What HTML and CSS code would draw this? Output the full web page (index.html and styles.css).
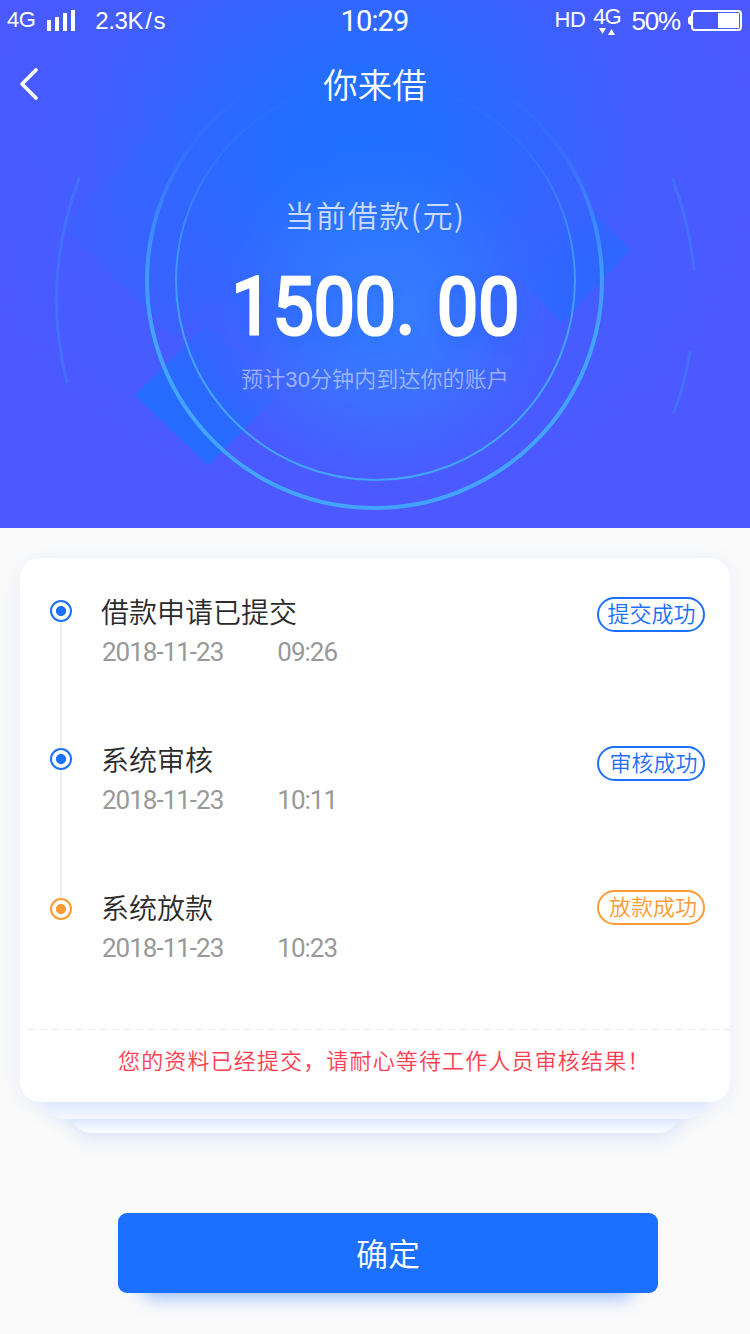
FILE: index.html
```html
<!DOCTYPE html>
<html lang="zh-CN">
<head>
<meta charset="utf-8">
<title>你来借</title>
<link rel="stylesheet" href="styles.css">
</head>
<body>
<div class="screen">
  <header class="hero">
    <svg class="hero-art" viewBox="0 0 750 528" width="750" height="528" aria-hidden="true">
      <defs>
        <linearGradient id="ring" x1="0" y1="80" x2="0" y2="330" gradientUnits="userSpaceOnUse">
          <stop offset="0" stop-color="#42a4ff" stop-opacity="0"/>
          <stop offset=".3" stop-color="#42a4ff" stop-opacity=".15"/>
          <stop offset=".7" stop-color="#42a4ff" stop-opacity=".75"/>
          <stop offset="1" stop-color="#42a4ff"/>
        </linearGradient>
        <radialGradient id="glow">
          <stop offset="0" stop-color="#3583ff" stop-opacity=".85"/>
          <stop offset=".45" stop-color="#3580ff" stop-opacity=".55"/>
          <stop offset="1" stop-color="#3a78ff" stop-opacity="0"/>
        </radialGradient>
        <linearGradient id="dl" x1="172" y1="430" x2="245" y2="360" gradientUnits="userSpaceOnUse">
          <stop offset="0" stop-color="#246cff"/>
          <stop offset=".45" stop-color="#246cff" stop-opacity=".85"/>
          <stop offset="1" stop-color="#246cff" stop-opacity=".25"/>
        </linearGradient>
        <linearGradient id="dr" x1="610" y1="290" x2="540" y2="215" gradientUnits="userSpaceOnUse">
          <stop offset="0" stop-color="#2a68ff" stop-opacity=".9"/>
          <stop offset=".5" stop-color="#2868ff" stop-opacity=".65"/>
          <stop offset="1" stop-color="#2868ff" stop-opacity="0"/>
        </linearGradient>
        <linearGradient id="db" x1="62" y1="0" x2="270" y2="0" gradientUnits="userSpaceOnUse">
          <stop offset="0" stop-color="#3167ff" stop-opacity=".3"/>
          <stop offset=".5" stop-color="#2f67ff" stop-opacity=".45"/>
          <stop offset="1" stop-color="#2b69ff" stop-opacity="0"/>
        </linearGradient>
      </defs>
      <path d="M62 225 187 100 300 213 175 338Z" fill="url(#db)"/>
      <path d="M135 395 208 323 280 395 208 465Z" fill="url(#dl)"/>
      <path d="M631 250 562 323 493 250 562 181Z" fill="url(#dr)"/>
      <ellipse cx="385" cy="315" rx="175" ry="175" fill="url(#glow)"/>
      <g fill="none" stroke="url(#ring)">
        <circle cx="374.500" cy="280.500" r="227.500" stroke-width="4"/>
        <circle cx="375.500" cy="280.500" r="199.500" stroke-width="2"/>
      </g>
      <g fill="none" stroke="#3f8cff" stroke-width="3" stroke-linecap="round" opacity=".42">
        <path d="M79 179Q41 281 67 382"/>
        <path d="M673 180Q689 222 694 269"/>
        <path d="M690 352Q685 383 674 412"/>
      </g>
    </svg>

    <div class="status">
      <div class="status-side">
        <span class="net">4G</span>
        <svg class="bars" width="29" height="21" viewBox="0 0 29 21"><path fill="#fff" d="M0 10h4v11H0zM8 7h4v14H8zM16 3h4v18h-4zM24 0h4v21h-4z"/></svg>
        <span class="speed">2.3K<i>/</i>s</span>
      </div>
      <time class="clock">10:29</time>
      <div class="status-side right">
        <span class="hd">HD</span>
        <span class="data"><span>4G</span><svg width="16" height="7" viewBox="0 0 16 7"><path fill="#fff" d="M0 0h7L3.500 6zM9 7h7l-3.500-6z"/></svg></span>
        <span class="pct">50%</span>
        <svg class="battery" width="54" height="21" viewBox="0 0 54 21"><rect x="4" y="1" width="49" height="19" rx="3" fill="none" stroke="#fff" stroke-width="2"/><path fill="#fff" d="M3 6v9H2L0 13V8l2-2zM30 3h21v15H30z"/></svg>
      </div>
    </div>

    <nav class="nav">
      <svg width="20" height="34" viewBox="0 0 20 34"><path d="M17 3 3 17 17 31" fill="none" stroke="#fff" stroke-width="3.600" stroke-linecap="round" stroke-linejoin="round"/></svg>
      <h1>你来借</h1>
    </nav>

    <div class="loan">
      <p class="loan-label">当前借款(元)</p>
      <p class="loan-amount">1500. 00</p>
      <p class="loan-note">预计30分钟内到达你的账户</p>
    </div>
  </header>

  <main class="content">
    <div class="stack">
      <section class="card">
        <ol class="steps">
          <li class="step">
            <span class="dot"></span>
            <div class="info"><h2>借款申请已提交</h2><p><span>2018-11-23</span><span>09:26</span></p></div>
            <span class="tag">提交成功</span>
          </li>
          <li class="step second">
            <span class="dot"></span>
            <div class="info"><h2>系统审核</h2><p><span>2018-11-23</span><span>10:11</span></p></div>
            <span class="tag">审核成功</span>
          </li>
          <li class="step current">
            <span class="dot"></span>
            <div class="info"><h2>系统放款</h2><p><span>2018-11-23</span><span>10:23</span></p></div>
            <span class="tag">放款成功</span>
          </li>
        </ol>
        <p class="notice">您的资料已经提交，请耐心等待工作人员审核结果！</p>
      </section>
      <div class="sheet sheet-one"></div>
      <div class="sheet sheet-two"></div>
    </div>
    <button class="confirm" type="button">确定</button>
  </main>
</div>
</body>
</html>
```
FILE: styles.css
```css
* { box-sizing: border-box; margin: 0; padding: 0; }
body {
  background: #fafafa;
  font-family: "Liberation Sans", "Noto Sans CJK SC", sans-serif;
  font-weight: 350;
}
.screen { width: 750px; height: 1334px; overflow: hidden; display: flex; flex-direction: column; }

.hero {
  position: relative;
  flex: none;
  height: 528px;
  color: #fff;
  background:
    radial-gradient(ellipse 400px 350px at 360px 150px, #1f70ff 0%, #236eff 20%, rgba(43, 105, 255, .8) 43%, rgba(60, 97, 255, .45) 70%, rgba(75, 89, 255, 0) 100%),
    #4b59ff;
}
.hero-art { position: absolute; inset: 0; }
.status, .nav, .loan { position: relative; }

.status {
  display: grid;
  grid-template-columns: 1fr auto 1fr;
  align-items: center;
  height: 40px;
  padding: 0 8px 0 7px;
}
.status-side { display: flex; align-items: center; }
.right { justify-content: flex-end; }
.net { font-size: 22px; letter-spacing: -.5px; }
.bars { margin-left: 12px; }
.speed { margin-left: 19px; padding-top: 1px; font-size: 24px; letter-spacing: -.4px; }
.speed i { font-style: normal; margin: 0 2px; }
.clock { font-family: Roboto, sans-serif; font-weight: 400; font-size: 29px; letter-spacing: -.8px; padding-top: 2px; }
.hd { font-size: 22px; letter-spacing: -.6px; }
.data { display: flex; flex-direction: column; align-items: center; margin: -1px 11px 0 8px; font-size: 22px; line-height: 24px; letter-spacing: -1px; }
.data svg { margin-top: -1px; }
.pct { font-size: 26px; letter-spacing: -1.2px; padding-top: 2px; }
.battery { margin-left: 8px; }

.nav {
  display: grid;
  grid-template-columns: 60px 1fr 60px;
  align-items: center;
  height: 88px;
  padding-left: 19px;
  padding-right: 19px;
}
.nav h1 { padding-top: 4px; text-align: center; font-size: 34.500px; font-weight: 350; line-height: 50px; }

.loan { display: flex; flex-direction: column; align-items: center; padding-top: 64px; }
.loan-label { font-family: "Noto Sans CJK SC", sans-serif; font-size: 30px; line-height: 44px; letter-spacing: 1.600px; color: rgba(255, 255, 255, .75); }
.loan-amount {
  margin-top: 23px;
  font-family: Roboto, sans-serif;
  font-size: 79.500px;
  line-height: 96px;
  font-weight: 400;
  word-spacing: 4px;
  white-space: pre;
  -webkit-text-stroke: 3.200px #fff;
  transform: scaleX(.92);
  text-shadow: 0 8px 14px rgba(20, 80, 245, .25);
}
.loan-note { margin-top: 9px; font-size: 22px; line-height: 32px; letter-spacing: .1px; color: rgba(255, 255, 255, .5); }

.content { display: flex; flex-direction: column; padding: 30px 20px 0; }
.stack { display: flex; flex-direction: column; align-items: center; isolation: isolate; }
.card {
  position: relative;
  z-index: 2;
  width: 710px;
  height: 544px;
  border-radius: 20px;
  background: #fff;
  box-shadow: 0 4px 22px rgba(70, 130, 245, .1);
}
.steps { list-style: none; height: 471px; padding: 33px 25px 0 30px; }
.step { position: relative; display: flex; align-items: flex-start; height: 148px; }
.step:not(:last-child)::before {
  content: "";
  position: absolute;
  left: 10px;
  top: 31px;
  width: 2px;
  height: 127px;
  background: #ededf0;
}
.dot {
  position: relative;
  flex: none;
  width: 22px;
  height: 22px;
  margin-top: 9px;
  border: 2px solid #1c70ff;
  border-radius: 50%;
  background: radial-gradient(circle, #1c70ff 4.700px, #fff 5.400px);
}
.info { flex: 1; margin-left: 29px; padding-top: 2px; }
.info h2 { font-size: 28px; line-height: 42px; font-weight: 350; color: #2b2b2b; }
.info p { display: flex; gap: 54px; padding-left: 1px; font-family: Roboto, sans-serif; font-weight: 400; font-size: 26px; line-height: 34px; letter-spacing: -1px; color: #999; }
.tag {
  width: 108px;
  height: 35px;
  margin-top: 6px;
  padding-left: 1px;
  border: 2px solid #1c70ff;
  border-radius: 18px;
  color: #1c70ff;
  font-size: 22px;
  line-height: 31px;
  text-align: center;
}
.second .tag { margin-top: 7px; padding-left: 5px; }
.current .dot { margin-top: 11px; border-color: #ff9b33; background: radial-gradient(circle, #ff9b33 4.700px, #fff 5.400px); }
.current .tag { margin-top: 3px; padding-left: 4px; border-color: #ff9b33; color: #ff9b33; }
.notice {
  height: 73px;
  padding-left: 98px;
  color: #ff3d51;
  font-family: "Noto Sans CJK SC", sans-serif;
  font-size: 22px;
  line-height: 60px;
  letter-spacing: 1.150px;
  white-space: nowrap;
  background: repeating-linear-gradient(90deg, #ececee 0 8px, transparent 8px 12px) 7px 0 / 100% 1px no-repeat;
}
.sheet { position: relative; height: 40px; border-radius: 0 0 22px 22px; }
.sheet-one {
  z-index: 1;
  width: 664px;
  margin-top: -23px;
  background: linear-gradient(#e9f1ff 23px, #f6f9ff);
  box-shadow: 0 4px 16px rgba(70, 130, 245, .08);
}
.sheet-two {
  width: 610px;
  margin-top: -26px;
  background: linear-gradient(#e9f1ff 26px, #fcfdff);
  box-shadow: 0 6px 20px rgba(70, 130, 245, .17);
}
.confirm {
  position: relative;
  width: 540px;
  height: 80px;
  margin: 80px 0 0 98px;
  padding-bottom: 3px;
  border: 0;
  border-radius: 9px;
  background: #1c70ff;
  color: #fff;
  font-family: "Noto Sans CJK SC", sans-serif;
  font-size: 32px;
  font-weight: 350;
  box-shadow: 0 32px 18px -27px rgba(28, 112, 255, .42), 0 2px 16px -8px rgba(28, 112, 255, .12);
}
```
